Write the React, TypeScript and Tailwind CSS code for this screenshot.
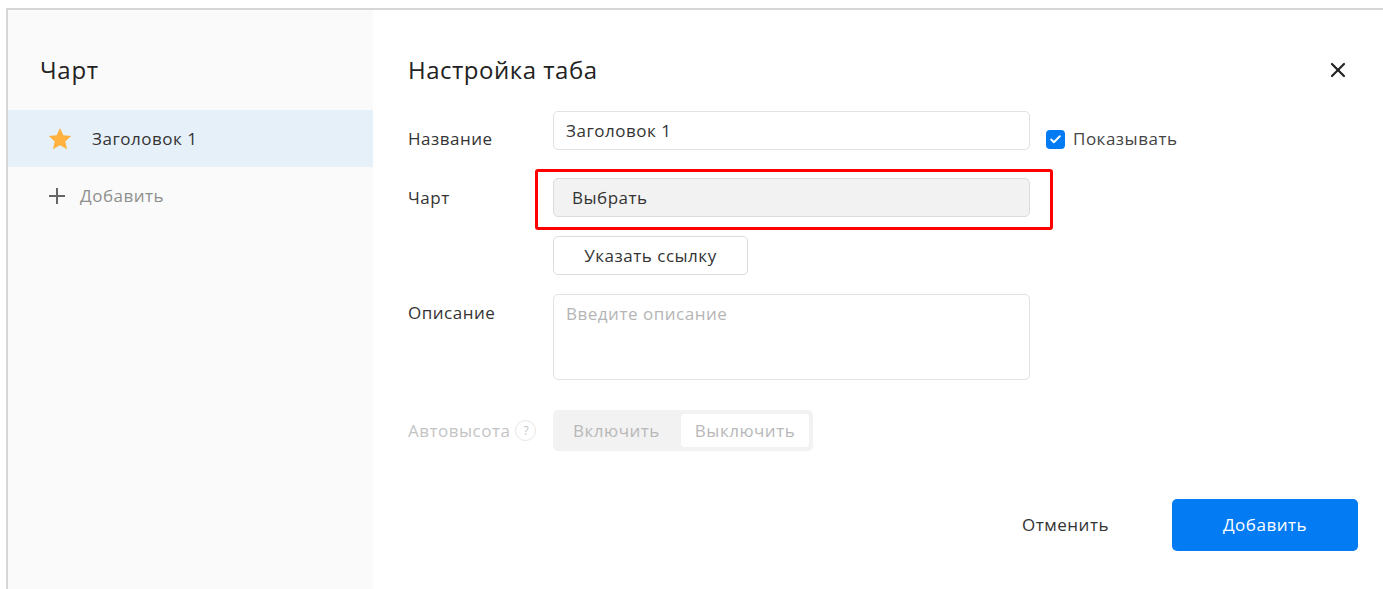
import { Check, X } from 'lucide-react';

const font = { fontFamily: '"Open Sans", "Liberation Sans", sans-serif' };

function Star() {
  return (
    <svg width="26" height="26" viewBox="0 0 24 24">
      <path
        d="M12 1.8l3.1 6.8 7.2.7-5.4 4.9 1.6 7.2L12 17.7l-6.5 3.7 1.6-7.2L1.7 9.3l7.2-.7z"
        fill="#ffb23f"
      />
    </svg>
  );
}

function PlusIcon() {
  return (
    <svg width="18" height="18" viewBox="0 0 18 18" stroke="#666" strokeWidth="2">
      <path d="M9 1v16M1 9h16" />
    </svg>
  );
}

function Sidebar() {
  return (
    <aside className="w-[365px] shrink-0 bg-[#fafafa]">
      <h2 className="px-8 pt-[45px] pb-[25px] text-[24px] leading-[30px] tracking-[0.03em] text-[#222]">Чарт</h2>
      <div className="flex h-[57px] items-center gap-[19px] bg-[#e6f0f9] pl-[39px]">
        <Star />
        <span className="text-[17px] tracking-[0.03em] text-[#333]">Заголовок 1</span>
      </div>
      <button className="flex h-[57px] items-center gap-[14px] pl-[40px] text-[17px] tracking-[0.03em] text-[#8f8f8f]">
        <PlusIcon />
        Добавить
      </button>
    </aside>
  );
}

function Row({ label, muted, children, top = 'items-center' }: { label: React.ReactNode; muted?: boolean; children: React.ReactNode; top?: string }) {
  return (
    <div className={`flex ${top}`}>
      <div className={`w-[145px] shrink-0 ${muted ? 'text-[#c4c4c4]' : 'text-[#333]'}`}>{label}</div>
      {children}
    </div>
  );
}

export default function App() {
  return (
    <div className="min-h-screen bg-white pt-2 pl-[6px] text-[17px] tracking-[0.03em]" style={font}>
      <div className="flex h-[581px] border-t-2 border-l-2 border-[#d6d6d6]">
        <Sidebar />
        <main className="flex flex-1 flex-col pl-[35px] pr-[25px]">
          <header className="flex items-center justify-between pt-[45px]">
            <h1 className="text-[24px] leading-[30px] text-[#222]">Настройка таба</h1>
            <X size={24} strokeWidth={2.2} className="mr-[8px] text-[#222]" />
          </header>

          <div className="mt-[26px] flex flex-col">
            <Row label={<span className="block pt-[16px] leading-[24px]">Название</span>} top="items-start">
              <div className="flex h-[39px] w-[477px] items-center rounded-[5px] border border-[#e2e2e2] px-[12px] text-[#333]">
                Заголовок 1
              </div>
              <label className="ml-[16px] mt-[16px] flex items-center gap-[8px] leading-[24px] text-[#444]">
                <span className="flex h-[19px] w-[19px] items-center justify-center rounded-[4px] bg-[#027bf3]">
                  <Check size={13} strokeWidth={3.5} className="text-white" />
                </span>
                Показывать
              </label>
            </Row>

            <div className="mt-[18px]">
              <Row label={<span className="relative -top-[2px]">Чарт</span>}>
                <div className="-ml-[18px] rounded-[3px] border-[3px] border-[#ff0000] pt-[6px] pr-[20px] pb-[10px] pl-[15px]">
                  <button className="flex h-[39px] w-[477px] items-center rounded-[5px] border border-[#dcdcdc] bg-[#f2f2f2] px-[18px] tracking-[0.03em] text-[#333]">
                    Выбрать
                  </button>
                </div>
              </Row>
            </div>

            <div className="mt-[6px] pl-[145px]">
              <button className="h-[39px] w-[195px] rounded-[5px] border border-[#dcdcdc] bg-white tracking-[0.03em] text-[#333]">
                Указать ссылку
              </button>
            </div>

            <div className="mt-[19px]">
              <Row label={<span className="block pt-[7px] leading-[24px]">Описание</span>} top="items-start">
                <div className="h-[86px] w-[477px] rounded-[5px] border border-[#e2e2e2] px-[12px] pt-[6px] text-[#b5b5b5]">
                  Введите описание
                </div>
              </Row>
            </div>

            <div className="mt-[30px]">
              <Row
                muted
                label={
                  <span className="flex items-center gap-[5px]">
                    Автовысота
                    <span className="flex h-[21px] w-[21px] items-center justify-center rounded-full border border-[#e6e6e6] text-[12px] tracking-normal text-[#c4c4c4]">
                      ?
                    </span>
                  </span>
                }
              >
                <div className="flex h-[41px] items-center rounded-[5px] bg-[#f2f2f2] p-[4px] text-[#b8b8b8]">
                  <span className="pl-[16px] pr-[21px]">Включить</span>
                  <span className="flex h-[33px] items-center rounded-[4px] bg-white px-[14px]">Выключить</span>
                </div>
              </Row>
            </div>
          </div>

          <footer className="mt-auto mb-[38px] flex items-center justify-end gap-[63px]">
            <button className="tracking-[0.03em] text-[#333]">Отменить</button>
            <button className="h-[52px] w-[186px] rounded-[5px] bg-[#027bf3] tracking-[0.03em] text-white">Добавить</button>
          </footer>
        </main>
      </div>
    </div>
  );
}
